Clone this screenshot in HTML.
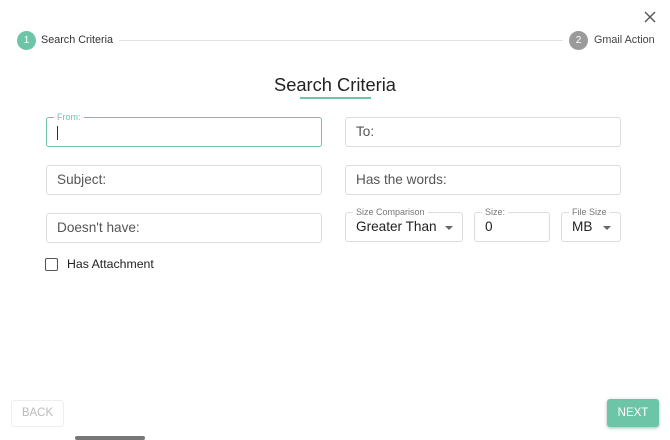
<!DOCTYPE html><html><head><style>
*{box-sizing:border-box;margin:0;padding:0}
body{width:670px;height:438px;background:#fff;font-family:"Liberation Sans",sans-serif;position:relative;overflow:hidden;color:#222}
.a{position:absolute}
.f{position:absolute;border:1px solid #ddd;border-radius:3px;height:30px;font-size:13.6px;color:#555;padding:6px 10px}
.v{color:#222}
.l{position:absolute;top:-6px;left:7px;background:#fff;padding:0 3px;font-size:9px;color:#777;line-height:10px}
.c{position:absolute;width:19px;height:19px;border-radius:50%;color:#fff;font-size:10px;text-align:center;line-height:19px}
.tri{position:absolute;width:0;height:0;border-left:4px solid transparent;border-right:4px solid transparent;border-top:4px solid #666;top:13px}
</style></head><body>
<svg class="a" style="left:644px;top:11px" width="12" height="12"><path d="M1 1L11 11M11 1L1 11" stroke="#555" stroke-width="1.4"/></svg>
<div class="c" style="left:17px;top:31px;background:#6cc5a7">1</div>
<div class="a" style="left:41px;top:34px;font-size:10.8px;color:#333">Search Criteria</div>
<div class="a" style="left:119px;top:40px;width:444px;height:1px;background:#e2e2e2"></div>
<div class="c" style="left:569px;top:31px;background:#9a9a9a">2</div>
<div class="a" style="left:594px;top:34px;font-size:10.8px;color:#444">Gmail Action</div>
<div class="a" style="left:0;width:670px;top:74px;text-align:center;font-size:18.3px;color:#222">Search Criteria</div>
<div class="a" style="left:300px;top:97px;width:71px;height:2px;background:#6cc5a7"></div>
<div class="f" style="left:46px;top:117px;width:276px;border:1.5px solid #6cc5a7"><span class="l" style="color:#6cc5a7">From:</span><span style="display:inline-block;width:1px;height:14px;background:#333;margin-top:2px"></span></div>
<div class="f" style="left:345px;top:117px;width:276px">To:</div>
<div class="f" style="left:46px;top:165px;width:276px">Subject:</div>
<div class="f" style="left:345px;top:165px;width:276px">Has the words:</div>
<div class="f" style="left:46px;top:213px;width:276px">Doesn't have:</div>
<div class="f v" style="left:345px;top:212px;width:118px"><span class="l">Size Comparison</span>Greater Than<span class="tri" style="left:99px"></span></div>
<div class="f v" style="left:474px;top:212px;width:76px"><span class="l">Size:</span>0</div>
<div class="f v" style="left:561px;top:212px;width:60px"><span class="l">File Size</span>MB<span class="tri" style="left:41px"></span></div>
<div class="a" style="left:45px;top:258px;width:13px;height:13px;border:1.5px solid #555;border-radius:2px"></div>
<div class="a" style="left:67px;top:257px;font-size:12.3px;color:#222">Has Attachment</div>
<div class="a" style="left:11px;top:400px;width:53px;height:27px;border:1px solid #eee;border-radius:3px;font-size:11.5px;color:#bbb;text-align:center;line-height:25px">BACK</div>
<div class="a" style="left:607px;top:399px;width:52px;height:28px;background:#6cc5a7;border-radius:3px;font-size:11.5px;color:#fff;text-align:center;line-height:28px;box-shadow:0 1px 3px rgba(0,0,0,.3)">NEXT</div>
<div class="a" style="left:75px;top:436px;width:70px;height:4px;background:#777;border-radius:2px"></div>
</body></html>
